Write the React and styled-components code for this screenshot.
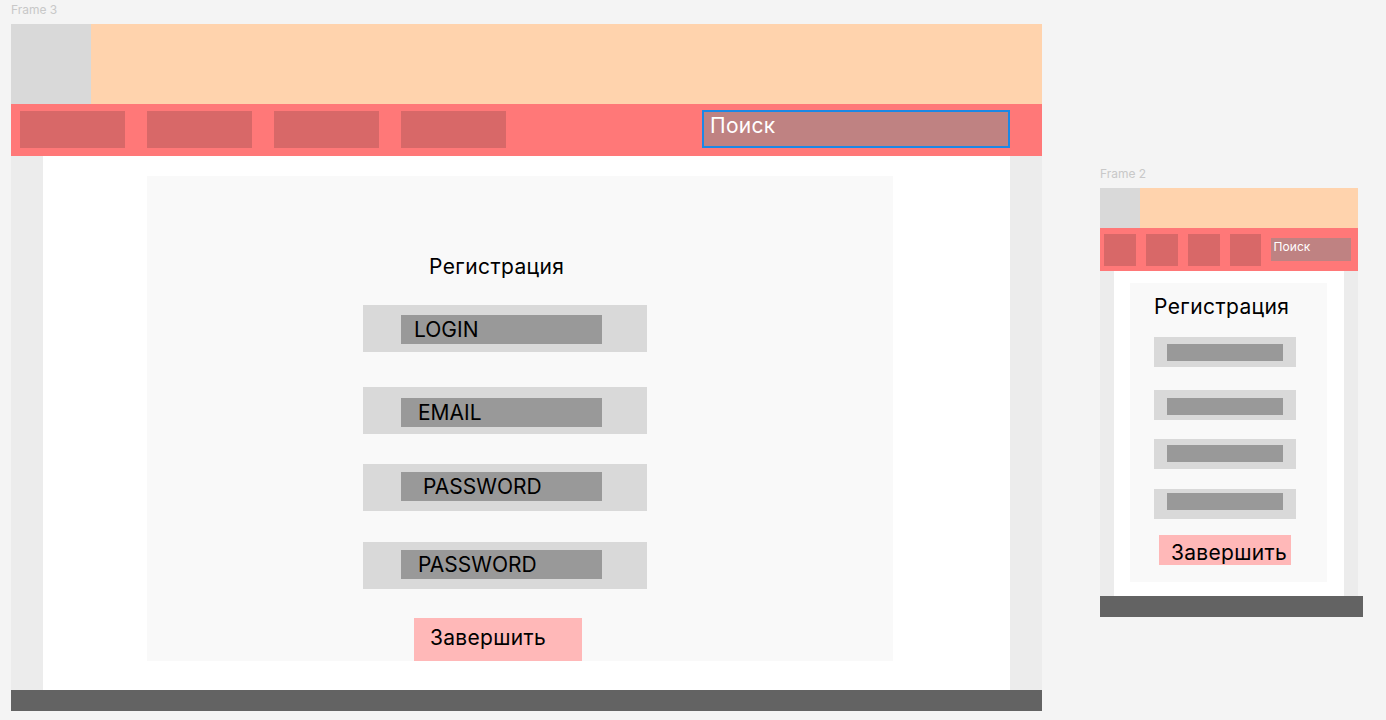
import React from 'react';
import styled, { createGlobalStyle } from 'styled-components';

const GlobalStyle = createGlobalStyle`
  html, body {
    margin: 0;
    padding: 0;
    background: #f4f4f4;
  }
  body {
    font-family: Inter, "Noto Sans", sans-serif;
    color: #000;
  }
`;

// Two frames, each with its own measurements
const desktop = {
  label: 'Frame 3',
  top: 0,
  left: 0,
  width: 1031,
  headerH: 80,
  logoW: 80,
  navH: 52,
  navPad: 9,
  navPadRight: 32,
  navGap: 22,
  item: { w: 105, h: 37, top: 7 },
  search: { w: 308, h: 38, top: 6, border: 2, font: 21, line: 28, pad: 6, spacing: 0.3 },
  sideW: 32,
  mainPadTop: 20,
  mainPadBottom: 29,
  panel: { left: 104, w: 746, padBottom: 0 },
  title: { top: 79, left: 282 },
  fields: [
    { top: 26, innerTop: 10, textPad: 13, text: 'LOGIN' },
    { top: 35, innerTop: 11, textPad: 17, text: 'EMAIL' },
    { top: 30, innerTop: 8, textPad: 22, text: 'PASSWORD' },
    { top: 31, innerTop: 8, textPad: 17, text: 'PASSWORD' },
  ],
  field: { left: 216, w: 284, h: 47, innerLeft: 38, innerW: 201, innerH: 29 },
  button: { top: 29, left: 267, w: 168, h: 43, pad: 16, line: 40 },
  footer: { w: 1031, h: 21 },
};

const mobile = {
  label: 'Frame 2',
  top: 164,
  left: 58,
  width: 258,
  headerH: 40,
  logoW: 40,
  navH: 43,
  navPad: 4,
  navPadRight: 7,
  navGap: 10,
  item: { w: 32, h: 32, top: 6 },
  search: { w: 80, h: 23, top: 10, border: 0, font: 12, line: 18, pad: 2, spacing: 0.1 },
  sideW: 14,
  mainPadTop: 12,
  mainPadBottom: 14,
  panel: { left: 16, w: 197, padBottom: 17 },
  title: { top: 12, left: 24 },
  fields: [
    { top: 18, innerTop: 7 },
    { top: 23, innerTop: 8 },
    { top: 19, innerTop: 6 },
    { top: 20, innerTop: 4 },
  ],
  field: { left: 24, w: 142, h: 30, innerLeft: 13, innerW: 116, innerH: 17 },
  button: { top: 16, left: 29, w: 132, h: 30, pad: 12, line: 35 },
  footer: { w: 263, h: 21 },
};

const Canvas = styled.div`
  display: flex;
  align-items: flex-start;
  padding-left: 11px;
  min-height: 720px;
  box-sizing: border-box;
`;

const FrameColumn = styled.div`
  margin-top: ${p => p.$top}px;
  margin-left: ${p => p.$left}px;
`;

const FrameLabel = styled.div`
  height: 24px;
  font-size: 12px;
  line-height: 20px;
  color: #c8c8c8;
`;

const Frame = styled.div`
  width: ${p => p.$w}px;
  display: flex;
  flex-direction: column;
`;

const Header = styled.div`
  display: flex;
  height: ${p => p.$h}px;
  background: #ffd3ad;
`;

const Logo = styled.div`
  width: ${p => p.$w}px;
  background: #d9d9d9;
`;

const Nav = styled.div`
  display: flex;
  align-items: flex-start;
  height: ${p => p.$h}px;
  padding-left: ${p => p.$pad}px;
  padding-right: ${p => p.$padRight}px;
  gap: ${p => p.$gap}px;
  background: #ff7878;
  box-sizing: border-box;
`;

const NavItem = styled.div`
  width: ${p => p.$w}px;
  height: ${p => p.$h}px;
  margin-top: ${p => p.$top}px;
  background: #d86868;
`;

const Search = styled.div`
  margin-left: auto;
  margin-top: ${p => p.$top}px;
  width: ${p => p.$w}px;
  height: ${p => p.$h}px;
  box-sizing: border-box;
  border: ${p => p.$border}px solid #1b88e6;
  background: #bf8282;
  color: #fff;
  font-size: ${p => p.$font}px;
  line-height: ${p => p.$line}px;
  letter-spacing: ${p => p.$spacing}px;
  padding-left: ${p => p.$pad}px;
`;

const Body = styled.div`
  display: flex;
`;

const Side = styled.div`
  width: ${p => p.$w}px;
  background: #ececec;
`;

const Main = styled.div`
  flex: 1;
  background: #fff;
  padding-top: ${p => p.$top}px;
  padding-bottom: ${p => p.$bottom}px;
`;

const Panel = styled.div`
  margin-left: ${p => p.$left}px;
  width: ${p => p.$w}px;
  padding-bottom: ${p => p.$bottom}px;
  background: #f9f9f9;
  display: flex;
  flex-direction: column;
  align-items: flex-start;
`;

const Title = styled.div`
  margin-top: ${p => p.$top}px;
  margin-left: ${p => p.$left}px;
  font-size: 21px;
  line-height: 24px;
  letter-spacing: 0.4px;
  white-space: nowrap;
`;

const FieldRow = styled.div`
  margin-top: ${p => p.$top}px;
  margin-left: ${p => p.$left}px;
  width: ${p => p.$w}px;
  height: ${p => p.$h}px;
  padding-top: ${p => p.$innerTop}px;
  box-sizing: border-box;
  background: #d9d9d9;
`;

const FieldInput = styled.div`
  margin-left: ${p => p.$left}px;
  width: ${p => p.$w}px;
  height: ${p => p.$h}px;
  padding-left: ${p => p.$pad}px;
  box-sizing: border-box;
  background: #999999;
  font-size: 21px;
  line-height: ${p => p.$h}px;
  white-space: nowrap;
`;

const SubmitButton = styled.div`
  margin-top: ${p => p.$top}px;
  margin-left: ${p => p.$left}px;
  width: ${p => p.$w}px;
  height: ${p => p.$h}px;
  padding-left: ${p => p.$pad}px;
  box-sizing: border-box;
  background: #ffb8b8;
  font-size: 21px;
  line-height: ${p => p.$line}px;
  letter-spacing: 0.3px;
  white-space: nowrap;
`;

const Footer = styled.div`
  width: ${p => p.$w}px;
  height: ${p => p.$h}px;
  background: #636363;
`;

const WireFrame = ({ c }) => (
  <FrameColumn $top={c.top} $left={c.left}>
    <FrameLabel>{c.label}</FrameLabel>
    <Frame $w={c.width}>
      <Header $h={c.headerH}>
        <Logo $w={c.logoW} />
      </Header>

      <Nav $h={c.navH} $pad={c.navPad} $padRight={c.navPadRight} $gap={c.navGap}>
        {[0, 1, 2, 3].map(i => (
          <NavItem key={i} $w={c.item.w} $h={c.item.h} $top={c.item.top} />
        ))}
        <Search
          $w={c.search.w}
          $h={c.search.h}
          $top={c.search.top}
          $border={c.search.border}
          $font={c.search.font}
          $line={c.search.line}
          $pad={c.search.pad}
          $spacing={c.search.spacing}
        >
          Поиск
        </Search>
      </Nav>

      <Body>
        <Side $w={c.sideW} />
        <Main $top={c.mainPadTop} $bottom={c.mainPadBottom}>
          <Panel $left={c.panel.left} $w={c.panel.w} $bottom={c.panel.padBottom}>
            <Title $top={c.title.top} $left={c.title.left}>Регистрация</Title>
            {c.fields.map((f, i) => (
              <FieldRow
                key={i}
                $top={f.top}
                $left={c.field.left}
                $w={c.field.w}
                $h={c.field.h}
                $innerTop={f.innerTop}
              >
                <FieldInput
                  $left={c.field.innerLeft}
                  $w={c.field.innerW}
                  $h={c.field.innerH}
                  $pad={f.textPad || 0}
                >
                  {f.text}
                </FieldInput>
              </FieldRow>
            ))}
            <SubmitButton
              $top={c.button.top}
              $left={c.button.left}
              $w={c.button.w}
              $h={c.button.h}
              $pad={c.button.pad}
              $line={c.button.line}
            >
              Завершить
            </SubmitButton>
          </Panel>
        </Main>
        <Side $w={c.sideW} />
      </Body>

      <Footer $w={c.footer.w} $h={c.footer.h} />
    </Frame>
  </FrameColumn>
);

const App = () => (
  <>
    <GlobalStyle />
    <Canvas>
      <WireFrame c={desktop} />
      <WireFrame c={mobile} />
    </Canvas>
  </>
);

export default App;
